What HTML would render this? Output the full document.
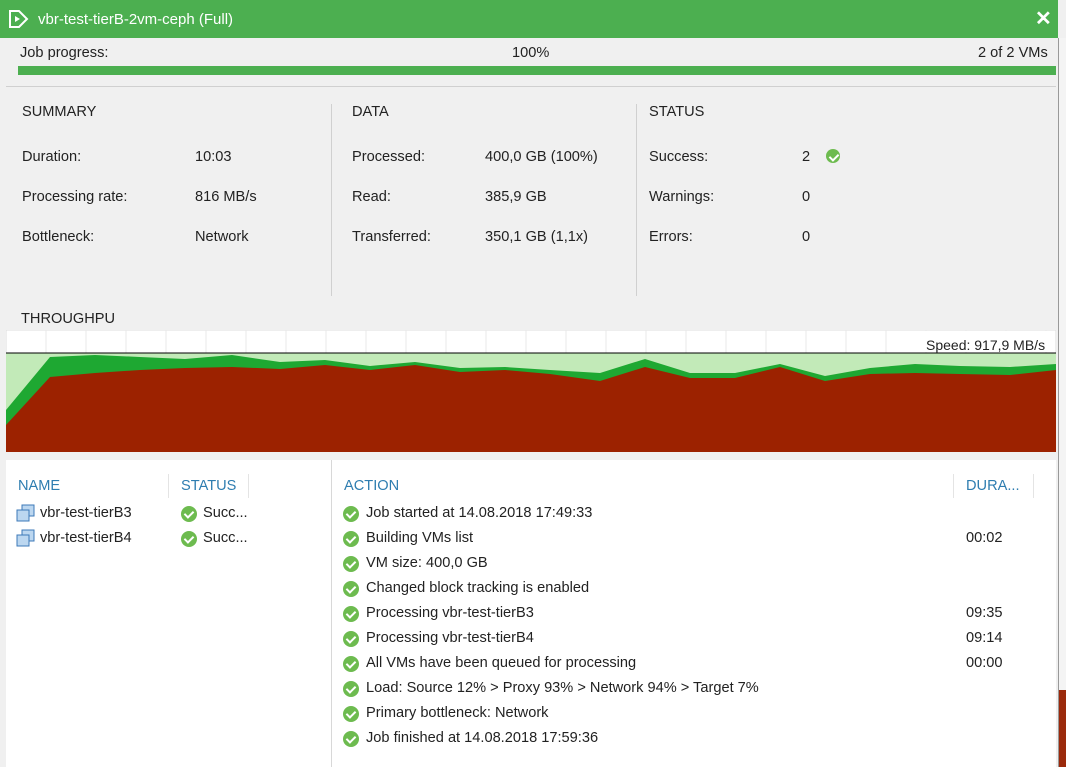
<!DOCTYPE html>
<html><head><meta charset="utf-8"><style>
*{margin:0;padding:0;box-sizing:border-box}
body{width:1066px;height:767px;overflow:hidden;background:#f0f0f0;font-family:"Liberation Sans",sans-serif;font-size:14.6px;color:#222;position:relative}
.a{position:absolute;white-space:nowrap}
.ck{position:absolute;width:16px;height:16px;border-radius:50%;background:#6dbb4f}
.ck:after{content:"";position:absolute;left:5px;top:3px;width:4px;height:7px;border:solid #fff;border-width:0 2px 2px 0;transform:rotate(45deg)}
.h{color:#2e7db0}
.vm{position:absolute;width:20px;height:18px}
</style></head><body>
<div class="a" style="left:0;top:0;width:1058px;height:38px;background:#4caf50"></div>
<svg class="a" style="left:8px;top:9px" width="22" height="20"><path d="M2 2h9l8 8-8 8H2z" fill="none" stroke="#fff" stroke-width="2"/><path d="M7 7l5 3-5 3z" fill="#fff"/></svg>
<div class="a" style="left:38px;top:11px;color:#fff;font-size:15px">vbr-test-tierB-2vm-ceph (Full)</div>
<div class="a" style="left:1035px;top:6px;color:#fff;font-size:20px;font-weight:bold">✕</div>
<div class="a" style="left:1058px;top:38px;width:8px;height:729px;background:#f4f4f4;border-left:1px solid #999"></div>
<div class="a" style="left:1059px;top:690px;width:7px;height:77px;background:#9b2a0c"></div>
<div class="a" style="left:20px;top:45px">Job progress:</div>
<div class="a" style="left:512px;top:45px">100%</div>
<div class="a" style="left:978px;top:45px">2 of 2 VMs</div>
<div class="a" style="left:18px;top:66px;width:1038px;height:9px;background:#4caf50"></div>
<div class="a" style="left:6px;top:86px;width:1050px;height:1px;background:#d0d0d0"></div>
<div class="a" style="left:22px;top:104px">SUMMARY</div>
<div class="a" style="left:22px;top:149px">Duration:</div><div class="a" style="left:195px;top:149px">10:03</div>
<div class="a" style="left:22px;top:189px">Processing rate:</div><div class="a" style="left:195px;top:189px">816 MB/s</div>
<div class="a" style="left:22px;top:229px">Bottleneck:</div><div class="a" style="left:195px;top:229px">Network</div>
<div class="a" style="left:331px;top:104px;width:1px;height:192px;background:#d0d0d0"></div>
<div class="a" style="left:352px;top:104px">DATA</div>
<div class="a" style="left:352px;top:149px">Processed:</div><div class="a" style="left:485px;top:149px">400,0 GB (100%)</div>
<div class="a" style="left:352px;top:189px">Read:</div><div class="a" style="left:485px;top:189px">385,9 GB</div>
<div class="a" style="left:352px;top:229px">Transferred:</div><div class="a" style="left:485px;top:229px">350,1 GB (1,1x)</div>
<div class="a" style="left:636px;top:104px;width:1px;height:192px;background:#d0d0d0"></div>
<div class="a" style="left:649px;top:104px">STATUS</div>
<div class="a" style="left:649px;top:149px">Success:</div><div class="a" style="left:802px;top:149px">2</div><div class="ck" style="left:826px;top:149px;width:14px;height:14px"></div>
<div class="a" style="left:649px;top:189px">Warnings:</div><div class="a" style="left:802px;top:189px">0</div>
<div class="a" style="left:649px;top:229px">Errors:</div><div class="a" style="left:802px;top:229px">0</div>
<div class="a" style="left:21px;top:311px">THROUGHPU</div>
<svg class="a" style="left:6px;top:330px" width="1050" height="122">
<rect width="1050" height="122" fill="#fff" stroke="#ddd"/>
<g stroke="#e8e8e8"><path d="M40 0v23M80 0v23M120 0v23M160 0v23M200 0v23M240 0v23M280 0v23M320 0v23M360 0v23M400 0v23M440 0v23M480 0v23M520 0v23M560 0v23M600 0v23M640 0v23M680 0v23M720 0v23M760 0v23M800 0v23M840 0v23M880 0v23M920 0v23M960 0v23M1000 0v23M1040 0v23"/></g>
<rect y="23" width="1050" height="99" fill="#c2eab8"/>
<line x1="0" y1="23" x2="1050" y2="23" stroke="#000"/>
<polygon fill="#1ea832" points="0,80 44,27 89,25 134,27 179,29 226,25 274,32 319,30 364,36 409,32 454,38 499,37 544,40 594,43 639,29 684,43 729,43 774,34 819,46 864,38 909,34 954,36 1004,37 1050,34 1050,122 0,122"/>
<polygon fill="#9c2200" points="0,95 44,47 89,43 134,40 179,38 226,37 274,39 319,35 364,40 409,35 454,42 499,40 544,44 594,51 639,37 684,48 729,48 774,37 819,51 864,44 909,43 954,44 1004,45 1050,40 1050,122 0,122"/>
</svg>
<div class="a" style="left:920px;top:331px;width:132px;height:21px;background:#fff"></div>
<div class="a" style="left:926px;top:337px;font-size:14px">Speed: 917,9 MB/s</div>
<div class="a" style="left:6px;top:460px;width:1050px;height:307px;background:#fff"></div>
<div class="a" style="left:331px;top:460px;width:1px;height:307px;background:#d8d8d8"></div>
<div class="a" style="left:168px;top:474px;width:1px;height:24px;background:#e4e4e4"></div>
<div class="a" style="left:248px;top:474px;width:1px;height:24px;background:#e4e4e4"></div>
<div class="a" style="left:953px;top:474px;width:1px;height:24px;background:#e4e4e4"></div>
<div class="a" style="left:1033px;top:474px;width:1px;height:24px;background:#e4e4e4"></div>
<div class="a h" style="left:18px;top:478px">NAME</div>
<div class="a h" style="left:181px;top:478px">STATUS</div>
<div class="a h" style="left:344px;top:478px">ACTION</div>
<div class="a h" style="left:966px;top:478px">DURA...</div>
<svg class="vm" style="left:16px;top:504px"><rect x="6" y="1" width="12" height="11" fill="#bcd7f0" stroke="#3d7ab8"/><rect x="1" y="6" width="12" height="11" fill="#bcd7f0" stroke="#3d7ab8"/></svg>
<svg class="vm" style="left:16px;top:529px"><rect x="6" y="1" width="12" height="11" fill="#bcd7f0" stroke="#3d7ab8"/><rect x="1" y="6" width="12" height="11" fill="#bcd7f0" stroke="#3d7ab8"/></svg>
<div class="a" style="left:40px;top:505px">vbr-test-tierB3</div>
<div class="a" style="left:40px;top:530px">vbr-test-tierB4</div>
<div class="ck" style="left:181px;top:506px"></div><div class="a" style="left:203px;top:505px">Succ...</div>
<div class="ck" style="left:181px;top:531px"></div><div class="a" style="left:203px;top:530px">Succ...</div>
<div class="ck" style="left:343px;top:506px"></div><div class="a" style="left:366px;top:505px">Job started at 14.08.2018 17:49:33</div>
<div class="ck" style="left:343px;top:531px"></div><div class="a" style="left:366px;top:530px">Building VMs list</div><div class="a" style="left:966px;top:530px">00:02</div>
<div class="ck" style="left:343px;top:556px"></div><div class="a" style="left:366px;top:555px">VM size: 400,0 GB</div>
<div class="ck" style="left:343px;top:581px"></div><div class="a" style="left:366px;top:580px">Changed block tracking is enabled</div>
<div class="ck" style="left:343px;top:606px"></div><div class="a" style="left:366px;top:605px">Processing vbr-test-tierB3</div><div class="a" style="left:966px;top:605px">09:35</div>
<div class="ck" style="left:343px;top:631px"></div><div class="a" style="left:366px;top:630px">Processing vbr-test-tierB4</div><div class="a" style="left:966px;top:630px">09:14</div>
<div class="ck" style="left:343px;top:656px"></div><div class="a" style="left:366px;top:655px">All VMs have been queued for processing</div><div class="a" style="left:966px;top:655px">00:00</div>
<div class="ck" style="left:343px;top:681px"></div><div class="a" style="left:366px;top:680px">Load: Source 12% &gt; Proxy 93% &gt; Network 94% &gt; Target 7%</div>
<div class="ck" style="left:343px;top:706px"></div><div class="a" style="left:366px;top:705px">Primary bottleneck: Network</div>
<div class="ck" style="left:343px;top:731px"></div><div class="a" style="left:366px;top:730px">Job finished at 14.08.2018 17:59:36</div>
</body></html>
